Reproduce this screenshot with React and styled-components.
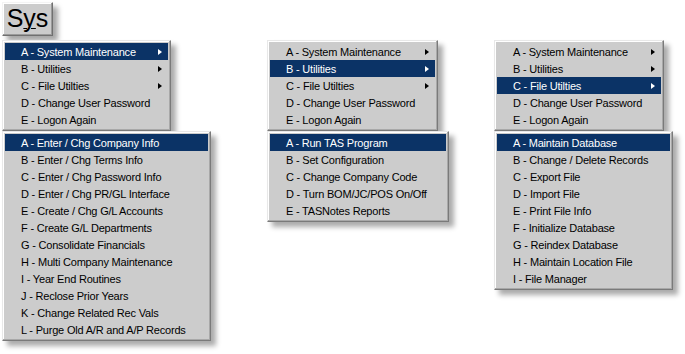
import React from "react";
import styled, { createGlobalStyle } from "styled-components";

const GlobalStyle = createGlobalStyle`
  html, body {
    margin: 0;
    padding: 0;
    background: #ffffff;
  }
  body {
    font-family: "Liberation Sans", Arial, sans-serif;
  }
`;

const Page = styled.div`
  width: 685px;
  height: 354px;
  padding: 2px 0 0 2px;
  box-sizing: border-box;
  overflow: hidden;
`;

const SysButton = styled.div`
  width: 51px;
  height: 34px;
  box-sizing: border-box;
  background: #cccccc;
  border: 1px solid;
  border-color: #f4f4f4 #707070 #707070 #f4f4f4;
  box-shadow: inset -1px -1px #9a9a9a, inset 1px 1px #ffffff,
    5px 5px 5px rgba(0, 0, 0, 0.35);
  display: flex;
  align-items: center;
  justify-content: center;
  font-size: 25px;
  color: #000;
  padding-bottom: 2px;

  u {
    text-decoration-thickness: 1px;
    text-underline-offset: 1px;
  }
`;

const Columns = styled.div`
  display: grid;
  grid-template-columns: 265px 227px auto;
  margin-top: 4px;
`;

const Column = styled.div`
  display: flex;
  flex-direction: column;
  align-items: flex-start;
`;

const Menu = styled.div`
  width: ${(p) => p.$width}px;
  box-sizing: border-box;
  background: #cccccc;
  border: 1px solid;
  border-color: #e8e8e8 #7a7a7a #7a7a7a #e8e8e8;
  box-shadow: inset -1px -1px #a8a8a8, inset 1px 1px #ffffff,
    5px 5px 5px rgba(0, 0, 0, 0.33);
  padding: 2px 2px;
  position: relative;
  z-index: ${(p) => p.$layer};
`;

const Item = styled.div`
  height: 17px;
  display: flex;
  align-items: center;
  justify-content: space-between;
  padding: 0 6px 0 16px;
  font-size: 11px;
  letter-spacing: -0.2px;
  color: ${(p) => (p.$active ? "#ffffff" : "#000000")};
  background: ${(p) => (p.$active ? "#0b3366" : "transparent")};
  white-space: nowrap;
`;

const Arrow = styled.span`
  width: 0;
  height: 0;
  border-top: 3.5px solid transparent;
  border-bottom: 3.5px solid transparent;
  border-left: 4px solid currentColor;
`;

const mainItems = [
  { label: "A - System Maintenance", sub: true },
  { label: "B - Utilities", sub: true },
  { label: "C - File Utilties", sub: true },
  { label: "D - Change User Password" },
  { label: "E - Logon Again" },
];

const columns = [
  {
    mainWidth: 169,
    active: 0,
    subWidth: 209,
    items: [
      "A - Enter / Chg Company Info",
      "B - Enter / Chg Terms Info",
      "C - Enter / Chg Password Info",
      "D - Enter / Chg PR/GL Interface",
      "E - Create / Chg G/L Accounts",
      "F - Create G/L Departments",
      "G - Consolidate Financials",
      "H - Multi Company Maintenance",
      "I - Year End Routines",
      "J - Reclose Prior Years",
      "K - Change Related Rec Vals",
      "L - Purge Old A/R and A/P Records",
    ],
  },
  {
    mainWidth: 171,
    active: 1,
    subWidth: 182,
    items: [
      "A - Run TAS Program",
      "B - Set Configuration",
      "C - Change Company Code",
      "D - Turn BOM/JC/POS On/Off",
      "E - TASNotes Reports",
    ],
  },
  {
    mainWidth: 170,
    active: 2,
    subWidth: 179,
    items: [
      "A - Maintain Database",
      "B - Change / Delete Records",
      "C - Export File",
      "D - Import File",
      "E - Print File Info",
      "F - Initialize Database",
      "G - Reindex Database",
      "H - Maintain Location File",
      "I - File Manager",
    ],
  },
];

export default function App() {
  return (
    <Page>
      <GlobalStyle />
      <SysButton>
        S<u>y</u>s
      </SysButton>
      <Columns>
        {columns.map((col, ci) => (
          <Column key={ci}>
            <Menu $width={col.mainWidth} $layer={1}>
              {mainItems.map((it, i) => (
                <Item key={it.label} $active={i === col.active}>
                  <span>{it.label}</span>
                  {it.sub && <Arrow />}
                </Item>
              ))}
            </Menu>
            <Menu $width={col.subWidth} $layer={2}>
              {col.items.map((label, i) => (
                <Item key={label} $active={i === 0}>
                  <span>{label}</span>
                </Item>
              ))}
            </Menu>
          </Column>
        ))}
      </Columns>
    </Page>
  );
}
